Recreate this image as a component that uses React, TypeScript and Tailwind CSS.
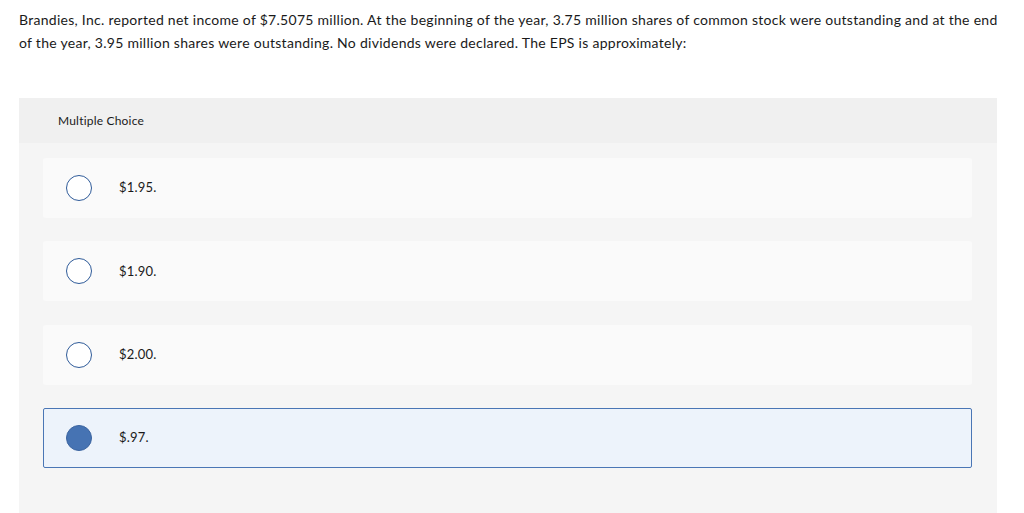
const options = [
  { label: "$1.95.", selected: false },
  { label: "$1.90.", selected: false },
  { label: "$2.00.", selected: false },
  { label: "$.97.", selected: true },
];

export default function App() {
  return (
    <div className="min-h-[513px] bg-white font-['Lato',sans-serif] text-[#1a1a1a]">
      <div className="px-[19px] pt-[8px]">
        <p className="text-[14px] leading-[23px] tracking-[0.28px]">
          Brandies, Inc. reported net income of $7.5075 million. At the beginning of the year, 3.75 million
          shares of common stock were outstanding and at the end of the year, 3.95 million shares were
          outstanding. No dividends were declared. The EPS is approximately:
        </p>
      </div>
      <div className="mx-[19px] mt-[44px] w-[978px] bg-[#f5f5f5] pb-[46px]">
        <div className="flex h-[45px] items-center bg-[#f0f0f0] px-[39px] text-[12px] tracking-[0.2px]">
          Multiple Choice
        </div>
        <div className="flex flex-col gap-[23.4px] pl-[24px] pr-[25px] pt-[15px]">
          {options.map((o) => (
            <div
              key={o.label}
              className={
                o.selected
                  ? "flex h-[60px] items-center rounded-[2px] border border-[#4a76b5] bg-[#edf3fb]"
                  : "flex h-[60px] items-center rounded-[3px] bg-[#fafafa]"
              }
            >
              <span
                className={
                  o.selected
                    ? "ml-[22px] h-[26px] w-[26px] rounded-full border border-[#3b64a0] bg-[#4673b3]"
                    : "ml-[23px] h-[26px] w-[26px] rounded-full border border-[#2f5b99] bg-white"
                }
              />
              <span className="ml-[27px] text-[13px] tracking-[0.2px]">{o.label}</span>
            </div>
          ))}
        </div>
      </div>
    </div>
  );
}
